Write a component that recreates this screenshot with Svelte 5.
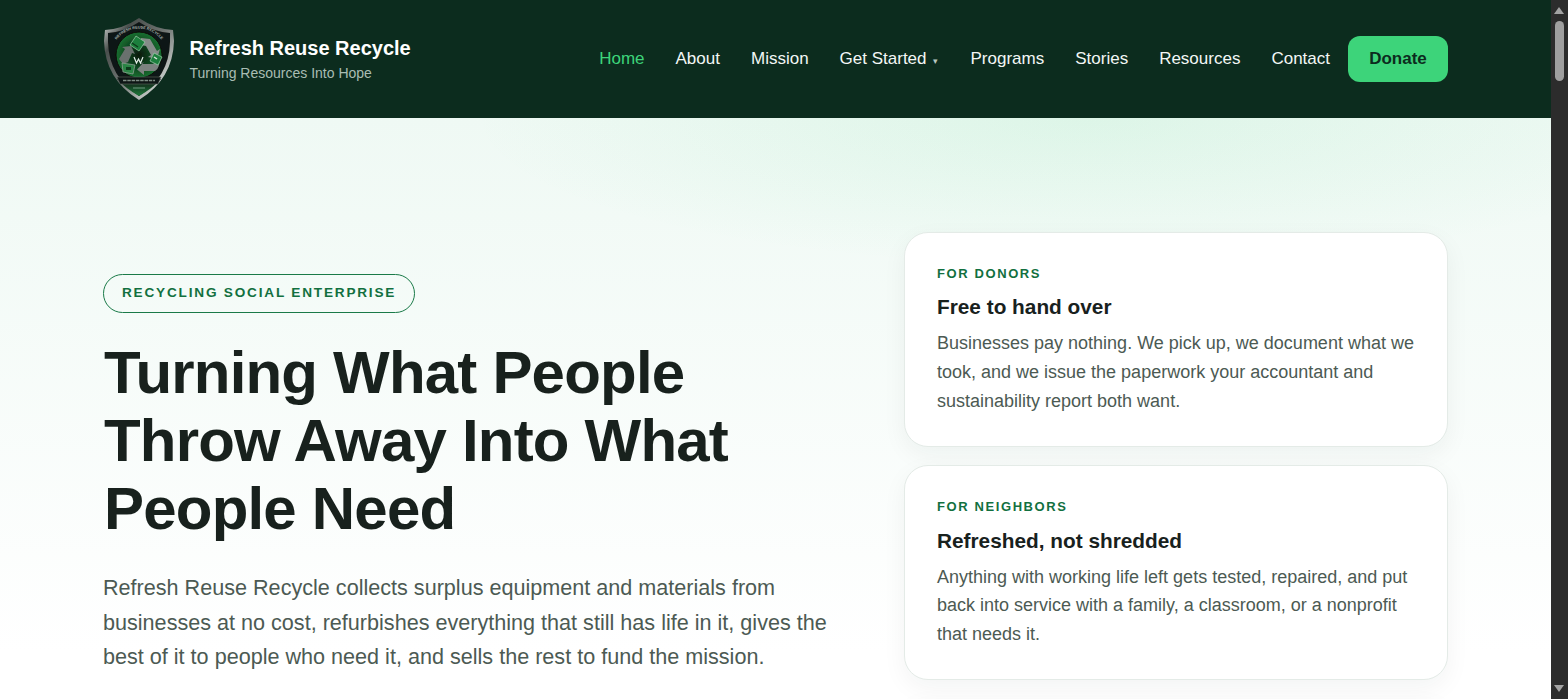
<script lang="ts">
	const links = ['Home', 'About', 'Mission', 'Get Started', 'Programs', 'Stories', 'Resources', 'Contact'];

	const cards = [
		{
			label: 'For donors',
			title: 'Free to hand over',
			body: 'Businesses pay nothing. We pick up, we document what we took, and we issue the paperwork your accountant and sustainability report both want.'
		},
		{
			label: 'For neighbors',
			title: 'Refreshed, not shredded',
			body: 'Anything with working life left gets tested, repaired, and put back into service with a family, a classroom, or a nonprofit that needs it.'
		}
	];
</script>

<div class="page">
	<header class="site-header">
		<a class="brand" href="#top">
			<svg class="logo" viewBox="0 0 72 84" aria-hidden="true">
				<defs>
					<linearGradient id="metal" x1="0" y1="0" x2="1" y2="1">
						<stop offset="0" stop-color="#e2e6e4" />
						<stop offset="0.22" stop-color="#4a4f4d" />
						<stop offset="0.5" stop-color="#6d7370" />
						<stop offset="0.8" stop-color="#c5cac7" />
						<stop offset="1" stop-color="#2f3533" />
					</linearGradient>
					<radialGradient id="core" cx="0.5" cy="0.5" r="0.55">
						<stop offset="0" stop-color="#061a0d" />
						<stop offset="0.55" stop-color="#0f4a22" />
						<stop offset="1" stop-color="#1a7a35" />
					</radialGradient>
					<linearGradient id="tip" x1="0" y1="0" x2="0" y2="1">
						<stop offset="0" stop-color="#0d1412" />
						<stop offset="1" stop-color="#1f7a3a" />
					</linearGradient>
					<filter id="soft"><feGaussianBlur stdDeviation="0.3" /></filter>
					<path id="arc-top" d="M11 27A28 28 0 0 1 61 27" />
				</defs>
				<g filter="url(#soft)">
					<path d="M36 1 Q52 12 70 13 L71 24 Q70 62 36 83 Q2 62 1 24 L2 13 Q20 12 36 1Z" fill="url(#metal)" />
					<path d="M36 5 Q51 15 67 16 L67 25 Q66 60 36 79 Q6 60 5 25 L5 16 Q21 15 36 5Z" fill="#111614" />
					<path d="M14 62 H58 Q50 71 36 79 Q22 71 14 62Z" fill="url(#tip)" />
					<circle cx="36" cy="38" r="23" fill="url(#core)" stroke="#070b09" stroke-width="1" />
					<!-- recycling arrows -->
					<path d="M38 21 L47 22 L54 34 L57 32 L54 42 L45 40 L48 38 L43 29 L38 28Z" fill="#858c89" />
					<path d="M16 42 L22 32 L19 30 L28 29 L32 37 L29 36 L25 45 L20 47Z" fill="#6a716e" />
					<path d="M37 47 H50 L55 43 Q58 50 52 54 H41 V58 L34 52.500 L41 45Z" fill="#7b8380" />
					<!-- badges on the arrows -->
					<path d="M33 19 L42 25 L36 34 L27 28Z" fill="#1f7f3c" stroke="#9fcfae" stroke-width=".7" />
					<path d="M29 26 L35 30" stroke="#0d3a1b" stroke-width="1.500" />
					<path d="M51 36 L59 40 L55 48 L47 44Z" fill="#1f7f3c" stroke="#9fcfae" stroke-width=".7" />
					<path d="M51 40 l3 2" stroke="#d5e6da" stroke-width="1.500" />
					<path d="M19 46 L32 48 L30 57 L20 55Z" fill="#2c8444" stroke="#9aa69f" stroke-width=".7" />
					<path d="M23 50 h5 v3 h-5z" fill="#0d3a1b" />
					<path d="M31 40 l2.500 6 l2 -4 l2 4 l2.500 -6" fill="none" stroke="#e6efe9" stroke-width="1.200" />
					<path d="M14 60 H58 L55 67 H17Z" fill="#0d1412" stroke="#5f6a65" stroke-width=".6" />
					<path d="M20 63.500 H52" stroke="#7f8e86" stroke-width="1.300" stroke-dasharray="3.500 .8" />
					<path d="M30 71 H42" stroke="#6e9a7e" stroke-width="1" />
				</g>
				<text class="logo-text" font-size="3.800" text-anchor="middle"><textPath href="#arc-top" startOffset="50%">REFRESH REUSE RECYCLE</textPath></text>
			</svg>
			<span class="brand-text">
				<strong>Refresh Reuse Recycle</strong>
				<small>Turning Resources Into Hope</small>
			</span>
		</a>
		<nav class="nav">
			{#each links as link, i}
				<a class="nav-link" class:active={i === 0} href="#top">
					{link}{#if link === 'Get Started'}<span class="caret">▾</span>{/if}
				</a>
			{/each}
			<a class="donate" href="#top">Donate</a>
		</nav>
	</header>

	<main class="hero" id="top">
		<section class="hero-copy">
			<span class="eyebrow">Recycling Social Enterprise</span>
			<h1>Turning What People Throw Away Into What People Need</h1>
			<p class="lede">
				Refresh Reuse Recycle collects surplus equipment and materials from businesses at no cost,
				refurbishes everything that still has life in it, gives the best of it to people who need
				it, and sells the rest to fund the mission.
			</p>
		</section>
		<aside class="hero-cards">
			{#each cards as card}
				<article class="card">
					<div class="card-label">{card.label}</div>
					<h2>{card.title}</h2>
					<p>{card.body}</p>
				</article>
			{/each}
			<article class="card card-next"></article>
		</aside>
	</main>
</div>

<div class="scrollbar" aria-hidden="true">
	<span class="arrow up"></span>
	<span class="thumb"></span>
	<span class="arrow down"></span>
</div>

<style>
	:global(html),
	:global(body) {
		height: 100%;
		overflow: hidden;
	}

	:global(body) {
		margin: 0;
		font-family: 'Liberation Sans', Arial, sans-serif;
		background: #fff;
	}

	.page {
		width: 1551px;
		height: 699px;
		overflow: hidden;
	}

	.site-header {
		height: 118px;
		box-sizing: border-box;
		padding: 0 103px;
		display: flex;
		align-items: center;
		justify-content: space-between;
		background: #0c2c1e;
	}

	.brand {
		display: flex;
		align-items: center;
		gap: 14.500px;
		text-decoration: none;
	}

	.logo {
		width: 72px;
		height: 84px;
		display: block;
	}

	.logo-text {
		fill: #aab5af;
		font-family: 'Liberation Sans', sans-serif;
		font-weight: 700;
	}

	.brand-text {
		display: flex;
		flex-direction: column;
		gap: 3px;
	}

	.brand-text strong {
		color: #fff;
		font-size: 20px;
		line-height: 25px;
	}

	.brand-text small {
		color: #a9bdb3;
		font-size: 14px;
		line-height: 18px;
	}

	.nav {
		display: flex;
		align-items: center;
		gap: 31px;
	}

	.nav-link {
		color: #f3f7f5;
		font-size: 17px;
		text-decoration: none;
		white-space: nowrap;
	}

	.nav-link.active {
		color: #3dd47a;
	}

	.caret {
		font-size: 9px;
		margin-left: 6px;
		margin-right: 2px;
		color: #b9c7c0;
	}

	.donate {
		margin-left: -13px;
		width: 100px;
		height: 46px;
		display: flex;
		align-items: center;
		justify-content: center;
		border-radius: 12px;
		background: #3dd47a;
		color: #0c2c1e;
		font-size: 17px;
		font-weight: 700;
		text-decoration: none;
	}

	.hero {
		height: 581px;
		box-sizing: border-box;
		padding: 113.500px 103px 0;
		display: grid;
		grid-template-columns: 1fr 544px;
		gap: 48px;
		background:
			radial-gradient(ellipse 620px 150px at 1090px 0, rgba(61, 212, 122, 0.1), transparent),
			linear-gradient(#eff9f4, #fff 92%);
	}

	.hero-copy {
		padding-top: 42.500px;
		display: flex;
		flex-direction: column;
		align-items: flex-start;
	}

	.eyebrow {
		box-sizing: border-box;
		height: 39px;
		padding: 0 18px 3px;
		display: flex;
		align-items: center;
		border: 1px solid #1a7a48;
		border-radius: 20px;
		color: #12703f;
		font-size: 13.600px;
		font-weight: 700;
		letter-spacing: 1.800px;
		text-transform: uppercase;
		white-space: nowrap;
	}

	h1 {
		margin: 26px 0 0 1px;
		color: #18211d;
		font-size: 60px;
		line-height: 68px;
		font-weight: 700;
		letter-spacing: -0.800px;
	}

	.lede {
		margin: 28px 0 0;
		color: #4c5a53;
		font-size: 21.600px;
		line-height: 34.500px;
	}

	.hero-cards {
		display: flex;
		flex-direction: column;
		gap: 18.500px;
	}

	.card {
		flex: none;
		box-sizing: border-box;
		height: 215px;
		padding: 32px;
		background: #fff;
		border: 1px solid #e4ebe7;
		border-radius: 24px;
		box-shadow: 0 8px 24px rgba(12, 44, 30, 0.05);
	}

	.card-label {
		margin-top: 1px;
		color: #12703f;
		font-size: 13px;
		line-height: 16px;
		font-weight: 700;
		letter-spacing: 1.600px;
		text-transform: uppercase;
	}

	h2 {
		margin: 12.500px 0 0;
		color: #18211d;
		font-size: 20.800px;
		line-height: 26px;
	}

	.card p {
		margin: 9px 0 0;
		color: #4c5a53;
		font-size: 18px;
		line-height: 28.800px;
	}

	.scrollbar {
		position: fixed;
		top: 0;
		right: 0;
		bottom: 0;
		width: 17px;
		background: #2c2c2c;
	}

	.thumb {
		position: absolute;
		top: 21px;
		left: 4px;
		width: 9px;
		height: 60px;
		border-radius: 5px;
		background: #9f9f9f;
	}

	.arrow {
		position: absolute;
		left: 3px;
		width: 0;
		height: 0;
		border-left: 5.500px solid transparent;
		border-right: 5.500px solid transparent;
	}

	.arrow.up {
		top: 7px;
		border-bottom: 7px solid #a3a3a3;
	}

	.arrow.down {
		bottom: 7px;
		border-top: 7px solid #a3a3a3;
	}
</style>
